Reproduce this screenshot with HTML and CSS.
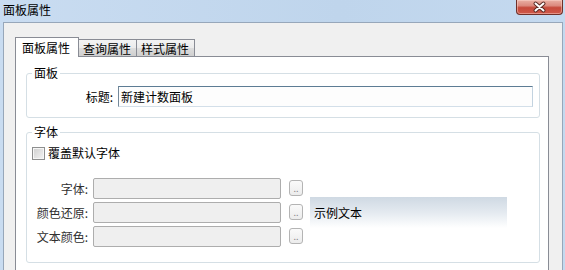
FILE: index.html
```html
<!DOCTYPE html>
<html lang="zh">
<head>
<meta charset="utf-8">
<title>面板属性</title>
<link rel="stylesheet" href="styles.css">
</head>
<body>
<div class="window">
  <div class="titlebar">
    <span class="title">面板属性</span>
    <div class="close">
      <svg width="45" height="14" viewBox="0 0 45 14">
        <path d="M18.5 3.5 L26.5 10.5 M26.5 3.5 L18.5 10.5" stroke="#5a2a24" stroke-width="4" stroke-linecap="round" fill="none"/>
        <path d="M18.5 3.5 L26.5 10.5 M26.5 3.5 L18.5 10.5" stroke="#ffffff" stroke-width="2" stroke-linecap="round" fill="none"/>
      </svg>
    </div>
  </div>
  <div class="client">
    <div class="tabs">
      <div class="tab active">面板属性</div>
      <div class="tab">查询属性</div>
      <div class="tab">样式属性</div>
    </div>
    <div class="panel">
      <fieldset class="group group-panel">
        <legend>面板</legend>
        <div class="row">
          <span class="lbl lbl-title">标题:</span>
          <div class="textbox">新建计数面板</div>
        </div>
      </fieldset>
      <fieldset class="group group-font">
        <legend>字体</legend>
        <div class="check-row">
          <span class="checkbox"></span>
          <span class="check-label">覆盖默认字体</span>
        </div>
        <div class="font-grid">
          <div class="font-rows">
            <div class="frow">
              <span class="lbl lbl-font">字体:</span>
              <div class="dfield"></div>
              <div class="dots">..</div>
            </div>
            <div class="frow">
              <span class="lbl lbl-font">颜色还原:</span>
              <div class="dfield"></div>
              <div class="dots">..</div>
            </div>
            <div class="frow">
              <span class="lbl lbl-font">文本颜色:</span>
              <div class="dfield"></div>
              <div class="dots">..</div>
            </div>
          </div>
          <div class="sample">示例文本</div>
        </div>
      </fieldset>
    </div>
  </div>
</div>
</body>
</html>
```
FILE: styles.css
```css
html, body {
  margin: 0;
  padding: 0;
}
body {
  width: 565px;
  height: 270px;
  overflow: hidden;
  font-family: "Noto Sans CJK SC", "Noto Sans", sans-serif;
  font-size: 12px;
  color: #000;
}
.window {
  height: 300px;
  box-sizing: border-box;
  padding: 0 2px 0 3px;
  background: linear-gradient(to right, #c9dcf1, #bfd5ec 60%, #c4d9ef);
  display: flex;
  flex-direction: column;
}
.titlebar {
  height: 22px;
  flex: none;
  display: flex;
  justify-content: space-between;
  align-items: flex-start;
}
.title {
  line-height: 16px;
  padding-top: 2px;
}
.close {
  width: 45px;
  height: 14px;
  border: 1px solid #6f3029;
  border-top: none;
  border-radius: 0 0 4px 4px;
  background: linear-gradient(#eab0a4 0%, #dc8a7e 40%, #c64a3b 55%, #d0594a 100%);
  box-shadow: inset 0 0 0 1px rgba(255, 220, 210, 0.45);
  display: flex;
}
.client {
  flex: 1;
  background: #f0f0f0;
  border: 1px solid #97a7ba;
  border-bottom: none;
  padding: 14px 13px 0 11px;
  display: flex;
  flex-direction: column;
}
.tabs {
  height: 20px;
  display: flex;
  align-items: flex-end;
  margin-bottom: -1px;
  position: relative;
  z-index: 1;
}
.tab {
  box-sizing: border-box;
  height: 17px;
  margin-bottom: 1px;
  padding: 1px 5px 0 4px;
  line-height: 15px;
  border: 1px solid #898c95;
  border-bottom: none;
  border-left: none;
  background: linear-gradient(#f3f3f3, #ebebeb 50%, #dddddd 51%, #cfcfcf);
}
.tab.active {
  height: 20px;
  margin-bottom: 0;
  margin-right: -1px;
  padding: 2px 8px 0 6px;
  line-height: 16px;
  border-left: 1px solid #898c95;
  background: #ffffff;
  position: relative;
  z-index: 2;
}
.tab.active + .tab {
  border-left: 1px solid #898c95;
}
.panel {
  flex: 1;
  background: #ffffff;
  border: 1px solid #898c95;
  padding: 8px 8px 0 10px;
}
.group {
  margin: 0;
  border: 1px solid #d5dfe5;
  border-radius: 3px;
  min-width: 0;
}
.group legend {
  margin-left: 5px;
  padding: 0 2px;
  line-height: 16px;
}
.group-panel {
  padding: 5px 5px 10px 0;
}
.row {
  display: flex;
  align-items: center;
  height: 21px;
}
.lbl {
  box-sizing: border-box;
  text-align: right;
  padding-right: 1px;
  line-height: 16px;
  flex: none;
}
.lbl-title {
  width: 87px;
}
.textbox {
  box-sizing: border-box;
  margin-left: 4px;
  width: 415px;
  height: 21px;
  padding-left: 2px;
  line-height: 19px;
  border: 1px solid #c3d3e0;
  border-top-color: #5d7c94;
  border-left-color: #73889a;
  border-bottom-color: #d3dfe9;
  background: #fdfdfd;
}
.group-font {
  margin-top: 6px;
  padding: 5px 5px 15px 0;
}
.check-row {
  display: flex;
  align-items: center;
  height: 16px;
}
.checkbox {
  box-sizing: border-box;
  width: 13px;
  height: 13px;
  margin-left: 5px;
  border: 1px solid #8e8f8f;
  background: linear-gradient(135deg, #cfcfcf, #f4f4f4);
  box-shadow: inset 0 0 0 1px #f6f6f6;
}
.check-label {
  margin-left: 3px;
  line-height: 16px;
}
.font-grid {
  margin-top: 17px;
  display: flex;
  align-items: center;
}
.font-rows {
  display: flex;
  flex-direction: column;
  gap: 3px;
}
.frow {
  display: flex;
  align-items: center;
  height: 21px;
}
.lbl-font {
  width: 62px;
  color: #303030;
}
.dfield {
  box-sizing: border-box;
  margin-left: 4px;
  width: 188px;
  height: 21px;
  border: 1px solid #adadad;
  border-radius: 2px;
  background: #efefef;
}
.dots {
  box-sizing: border-box;
  margin-left: 8px;
  width: 14px;
  height: 16px;
  margin-top: -2px;
  border: 1px solid #b4b4b4;
  border-radius: 3px;
  background: linear-gradient(#fafafa, #ececec);
  color: #8a8a8a;
  font-size: 9px;
  line-height: 9px;
  display: flex;
  align-items: flex-end;
  justify-content: center;
  padding-bottom: 2px;
  letter-spacing: 0;
}
.sample {
  margin-left: 7px;
  width: 197px;
  height: 31px;
  box-sizing: border-box;
  padding-left: 4px;
  line-height: 31px;
  background: linear-gradient(#cfd9e3, #e4eaf0 50%, #ffffff);
}
```
